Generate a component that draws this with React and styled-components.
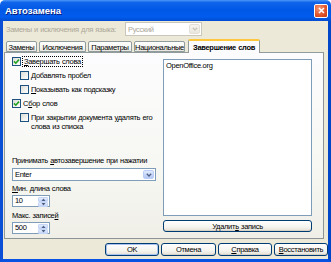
import React from 'react'
import styled, { createGlobalStyle } from 'styled-components'

const Global = createGlobalStyle`
  html, body {
    margin: 0;
    padding: 0;
    background: #ffffff;
  }
  body {
    font-family: 'Liberation Sans', Arial, sans-serif;
    font-size: 7.5px;
    letter-spacing: -0.3px;
    word-spacing: 0.5px;
    color: #000;
  }
`

const Window = styled.div`
  width: 331px;
  height: 262px;
  display: flex;
  flex-direction: column;
  overflow: hidden;
`
const TitleBar = styled.div`
  height: 21px;
  flex: none;
  display: flex;
  align-items: center;
  justify-content: space-between;
  padding: 0 3px 0 5px;
  border-radius: 5px 5px 0 0;
  background: linear-gradient(
    to bottom,
    #4a96f7 0%,
    #1064ea 12%,
    #0058e6 45%,
    #025ced 80%,
    #004cd0 100%
  );
`
const Title = styled.span`
  color: #fff;
  font-weight: 700;
  font-size: 9.5px;
  letter-spacing: 0;
  text-shadow: 1px 1px 0 #0a1e78;
`
const CloseButton = styled.div`
  width: 12px;
  height: 12px;
  border: 1px solid #fff;
  border-radius: 2px;
  background: radial-gradient(circle at 35% 30%, #f39b7c 0%, #e3562c 55%, #c23c12 100%);
  display: flex;
  align-items: center;
  justify-content: center;
`
const Client = styled.div`
  flex: 1;
  display: flex;
  flex-direction: column;
  background: #ece9d8;
  border: 3px solid #0752e0;
  border-top: none;
  border-left-color: #0a4fd6;
  border-right-color: #0046c8;
`
const LangRow = styled.div`
  height: 14px;
  margin-top: 1px;
  display: flex;
  align-items: center;
  padding-left: 3px;
`
const LangLabel = styled.span`
  width: 119px;
  color: #aca899;
  white-space: nowrap;
`
const ComboBox = styled.div`
  width: ${(p) => p.width}px;
  height: ${(p) => p.height}px;
  box-sizing: border-box;
  display: flex;
  align-items: center;
  border: 1px solid ${(p) => (p.disabled ? '#c9c7ba' : '#7f9db9')};
  background: #fff;
  color: ${(p) => (p.disabled ? '#aca899' : '#000')};
  padding: 1px 1px 1px 2px;
`
const ComboText = styled.span`
  flex: 1;
  white-space: nowrap;
`
const ArrowButton = styled.div`
  width: 11px;
  height: 100%;
  box-sizing: border-box;
  border-radius: 2px;
  display: flex;
  align-items: center;
  justify-content: center;
  border: 1px solid ${(p) => (p.disabled ? '#e3e1d6' : '#b9cdf6')};
  background: ${(p) =>
    p.disabled
      ? 'linear-gradient(#f6f5f0, #e9e7df)'
      : 'linear-gradient(#e3ecfd, #c4d4f8 60%, #b5c9f5)'};
`
const Tabs = styled.div`
  height: 13px;
  margin-top: 3px;
  display: flex;
  align-items: flex-end;
  padding-left: 3px;
  gap: 2px;
`
const Tab = styled.div`
  width: ${(p) => p.width}px;
  height: ${(p) => (p.active ? 14 : 11)}px;
  box-sizing: border-box;
  display: flex;
  align-items: center;
  justify-content: center;
  white-space: nowrap;
  border: 1px solid #919b9c;
  border-bottom: ${(p) => (p.active ? 'none' : '1px solid #919b9c')};
  border-radius: 2px 2px 0 0;
  font-weight: ${(p) => (p.active ? 700 : 400)};
  margin-left: ${(p) => (p.active ? 1 : 0)}px;
  background: ${(p) =>
    p.active ? '#fcfcfe' : 'linear-gradient(#ffffff, #f3f3ef 70%, #e6e5dd)'};
  border-top: ${(p) => (p.active ? '2px solid #ffc83c' : '1px solid #919b9c')};
  position: relative;
  top: ${(p) => (p.active ? 1 : 0)}px;
  padding-top: ${(p) => (p.active ? 0 : 1)}px;
`
const Panel = styled.div`
  height: 187px;
  margin-left: 1px;
  width: 320px;
  box-sizing: border-box;
  border: 1px solid #919b9c;
  border-right-color: #8c9496;
  border-bottom-color: #8c9496;
  background: linear-gradient(#fcfcfe 0%, #f6f6f1 70%, #efeee7 100%);
  display: grid;
  grid-template-columns: 146px 149px;
  column-gap: 5px;
  padding: 1px 11px 0 7px;
`
const LeftColumn = styled.div`
  display: flex;
  flex-direction: column;
  padding-bottom: 4px;
`
const OptionRow = styled.div`
  display: flex;
  align-items: ${(p) => (p.multi ? 'flex-start' : 'center')};
  height: ${(p) => (p.multi ? 21 : 14)}px;
  padding-left: ${(p) => (p.indent ? 8 : 0)}px;
  padding-top: ${(p) => (p.multi ? 3 : 0)}px;
  box-sizing: border-box;
  gap: 2px;
`
const Box = styled.div`
  width: 9px;
  height: 9px;
  flex: none;
  box-sizing: border-box;
  border: 1px solid #1c5180;
  background: linear-gradient(135deg, #dcdcd7 0%, #f2f2ef 60%, #ffffff 100%);
  display: flex;
  align-items: center;
  justify-content: center;
`
const OptionText = styled.span`
  line-height: 9px;
  white-space: nowrap;
  padding: ${(p) => (p.focused ? '0 1px' : '0')};
  outline: ${(p) => (p.focused ? '1px dotted #000' : 'none')};
  outline-offset: 0;
`
const BottomGroup = styled.div`
  margin-top: auto;
  display: flex;
  flex-direction: column;
`
const FieldLabel = styled.div`
  height: 10px;
  line-height: 10px;
  white-space: nowrap;
  margin-top: ${(p) => p.gap}px;
`
const FieldGap = styled.div`
  margin-top: ${(p) => p.gap}px;
`
const SpinField = styled.div`
  width: 38px;
  height: 12px;
  box-sizing: border-box;
  border: 1px solid #7f9db9;
  background: #fff;
  display: flex;
  align-items: stretch;
  padding: 1px;
`
const SpinText = styled.span`
  flex: 1;
  padding-left: 1px;
  line-height: 8px;
`
const SpinButtons = styled.div`
  width: 10px;
  display: flex;
  flex-direction: column;
`
const SpinButton = styled.div`
  flex: 1;
  display: flex;
  align-items: center;
  justify-content: center;
  border: 1px solid #c6d6f7;
  border-radius: 1px;
  background: linear-gradient(#e6eefc, #c4d4f8);
`
const RightColumn = styled.div`
  display: flex;
  flex-direction: column;
  padding: 5px 0 6px;
  gap: 4px;
`
const ListBox = styled.div`
  flex: 1;
  border: 1px solid #7f9db9;
  background: #fff;
  padding: 1px 2px;
  line-height: 9px;
`
const Button = styled.div`
  height: ${(p) => p.height || 13}px;
  width: ${(p) => (p.width ? `${p.width}px` : 'auto')};
  box-sizing: border-box;
  display: flex;
  align-items: center;
  justify-content: center;
  white-space: pre;
  border: 1px solid #003c74;
  border-radius: 3px;
  background: linear-gradient(#ffffff 0%, #f5f4ef 60%, #e3e0d6 100%);
  box-shadow: ${(p) =>
    p.primary ? 'inset 0 0 0 1px #a9c3ee' : 'inset 0 -1px 0 #d6d0c5'};
`
const ButtonRow = styled.div`
  margin-top: 4px;
  display: flex;
  justify-content: flex-end;
  gap: 2px;
`

const Check = () => (
  <svg width="7" height="7" viewBox="0 0 7 7">
    <path d="M1 3.4 L2.8 5.2 L6 1.6" fill="none" stroke="#21a121" strokeWidth="1.6" />
  </svg>
)

const Chevron = ({ color }) => (
  <svg width="6" height="4" viewBox="0 0 6 4">
    <path d="M0.8 0.8 L3 3 L5.2 0.8" fill="none" stroke={color} strokeWidth="1.3" />
  </svg>
)

const Tri = ({ up }) => (
  <svg width="5" height="3" viewBox="0 0 5 3">
    <path d={up ? 'M0.5 3 L2.5 0.5 L4.5 3 Z' : 'M0.5 0 L2.5 2.5 L4.5 0 Z'} fill="#4d6185" />
  </svg>
)

function Option({ checked, indent, multi, focused, children }) {
  return (
    <OptionRow indent={indent} multi={multi}>
      <Box>{checked && <Check />}</Box>
      <OptionText focused={focused}>{children}</OptionText>
    </OptionRow>
  )
}

function Spin({ value }) {
  return (
    <SpinField>
      <SpinText>{value}</SpinText>
      <SpinButtons>
        <SpinButton>
          <Tri up />
        </SpinButton>
        <SpinButton>
          <Tri />
        </SpinButton>
      </SpinButtons>
    </SpinField>
  )
}

export default function App() {
  return (
    <>
      <Global />
      <Window>
        <TitleBar>
          <Title>Автозамена</Title>
          <CloseButton>
            <svg width="7" height="7" viewBox="0 0 7 7">
              <path d="M1 1 L6 6 M6 1 L1 6" stroke="#fff" strokeWidth="1.5" />
            </svg>
          </CloseButton>
        </TitleBar>
        <Client>
          <LangRow>
            <LangLabel>Замены и исключения для языка:</LangLabel>
            <ComboBox width={77} height={14} disabled>
              <ComboText>Русский</ComboText>
              <ArrowButton disabled>
                <Chevron color="#c9c7ba" />
              </ArrowButton>
            </ComboBox>
          </LangRow>
          <Tabs>
            <Tab width={31}>Замены</Tab>
            <Tab width={47}>Исключения</Tab>
            <Tab width={44}>Параметры</Tab>
            <Tab width={51}>Национальные</Tab>
            <Tab width={72} active>
              Завершение слов
            </Tab>
          </Tabs>
          <Panel>
            <LeftColumn>
              <Option checked focused>
                <u>З</u>авершать слова
              </Option>
              <Option indent>
                <u>Д</u>обавлять пробел
              </Option>
              <Option indent>
                <u>П</u>оказывать как подсказку
              </Option>
              <Option checked>
                С<u>б</u>ор слов
              </Option>
              <Option indent multi>
                При закрытии документа <u>у</u>далять его
                <br />
                слова из списка
              </Option>
              <BottomGroup>
                <FieldLabel gap={0}>
                  Принимать <u>а</u>втозавершение при нажатии
                </FieldLabel>
                <FieldGap gap={2}>
                  <ComboBox width={144} height={13}>
                    <ComboText>Enter</ComboText>
                    <ArrowButton>
                      <Chevron color="#4d6185" />
                    </ArrowButton>
                  </ComboBox>
                </FieldGap>
                <FieldLabel gap={3}>
                  <u>М</u>ин. длина слова
                </FieldLabel>
                <FieldGap gap={1}>
                  <Spin value="10" />
                </FieldGap>
                <FieldLabel gap={4}>
                  Макс. записе<u>й</u>
                </FieldLabel>
                <FieldGap gap={1}>
                  <Spin value="500" />
                </FieldGap>
              </BottomGroup>
            </LeftColumn>
            <RightColumn>
              <ListBox>OpenOffice.org</ListBox>
              <Button height={12}>
                <span>
                  Удалит<u>ь</u>
                  {' запись'}
                </span>
              </Button>
            </RightColumn>
          </Panel>
          <ButtonRow>
            <Button width={54} primary>
              OK
            </Button>
            <Button width={55}>Отмена</Button>
            <Button width={54}>
              <span>
                <u>С</u>правка
              </span>
            </Button>
            <Button width={54}>
              <span>
                <u>В</u>осстановить
              </span>
            </Button>
          </ButtonRow>
        </Client>
      </Window>
    </>
  )
}
